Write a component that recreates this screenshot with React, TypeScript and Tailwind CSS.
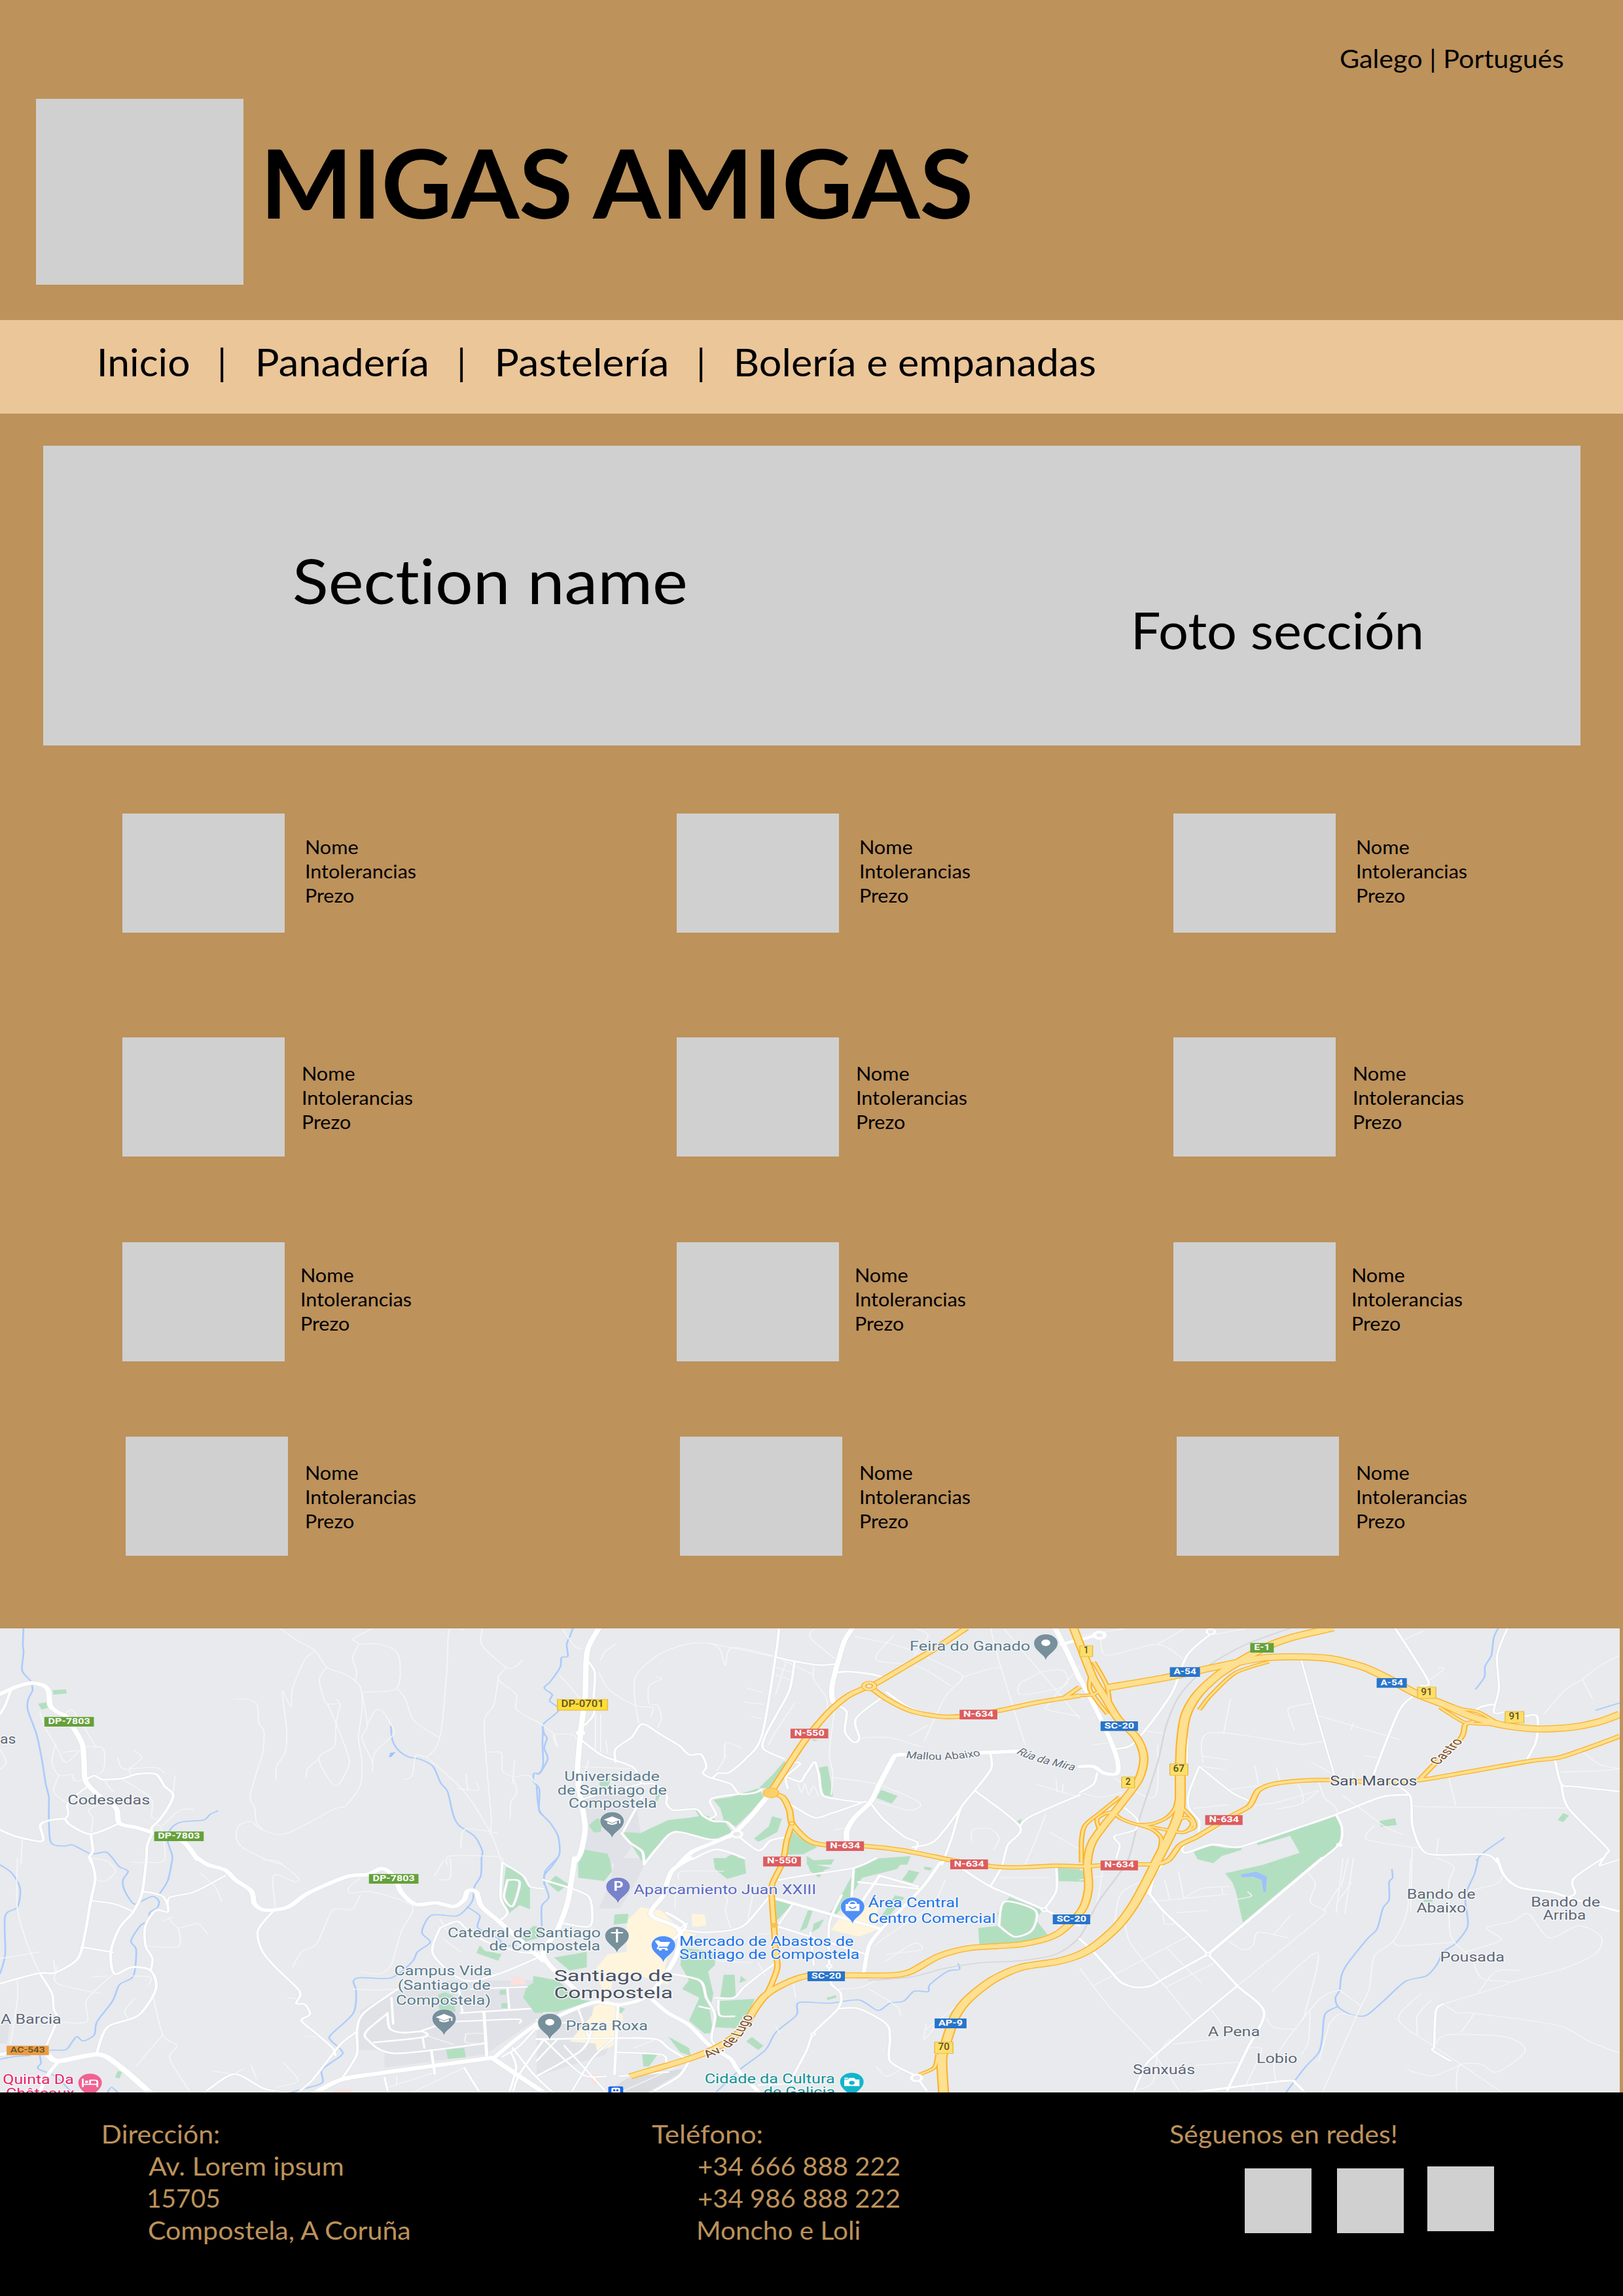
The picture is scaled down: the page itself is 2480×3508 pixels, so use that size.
import React, { useLayoutEffect, useRef } from "react";

/* ---------- text fitted to a given ink width ---------- */

function Fit({ text, className = "" }: { text: string; className?: string }) {
  const outer = useRef<HTMLSpanElement>(null);
  const inner = useRef<HTMLSpanElement>(null);
  useLayoutEffect(() => {
    const box = outer.current!;
    const el = inner.current!;
    const range = document.createRange();
    range.selectNodeContents(el);
    const cs = getComputedStyle(el);
    const ctx = document.createElement("canvas").getContext("2d")!;
    ctx.font = `${cs.fontWeight} ${cs.fontSize} ${cs.fontFamily}`;
    const m = ctx.measureText(text);
    // The rendered advance differs from the canvas one when ligatures are off.
    const advance = el.offsetWidth || m.width;
    const ink = m.actualBoundingBoxRight + m.actualBoundingBoxLeft + (text.length > 1 ? advance - m.width : 0);
    const s = box.clientWidth / ink;
    el.style.transform = `translateX(${m.actualBoundingBoxLeft * s}px) scaleX(${s})`;
  }, [text]);
  return (
    <span ref={outer} className={`block shrink-0 ${className}`}>
      <span ref={inner} className="inline-block origin-left whitespace-nowrap [font-variant-ligatures:none]">
        {text}
      </span>
    </span>
  );
}

/* ---------- map data ---------- */

type Road = [number, string];
type Tile = {
  x: number;
  y: number;
  grays?: string[];
  beiges?: string[];
  greens?: string[];
  waters?: string[];
  pinks?: string[];
  rivers?: string[];
  minor?: string[];
  white?: Road[];
  rails?: string[];
  yellow?: Road[];
};

const tiles: Tile[] = [
  {
    x: 0,
    y: 0,
    greens: ["152,310 190,307 193,325 154,331", "110,372 133,366 140,390 120,400"],
    waters: ["1122,617 1127,597 1142,594 1130,615"],
    rivers: [
      "68,25 66,100 68,140 64,220 88,268 94,310 82,350 80,400 105,510 120,620 132,740 141,800 141,900 147,1008 185,1025 210,1020 262,1060 305,1052 325,1080",
      "628,864 606,880 588,905 522,915 492,948 484,1000 496,1060 498,1080",
      "1128,475 1133,540 1150,585 1178,615 1215,628 1250,660 1272,735 1292,775 1308,880 1325,930 1370,980 1392,1045 1390,1080",
      "1568,475 1566,560 1568,650 1557,690 1541,692 1541,730 1557,765 1556,860 1568,885",
    ],
    minor: [
      "807,25 850,75 910,130 943,205 1000,240 1040,295 1045,400 1035,525 1045,640 1040,745 998,840 965,855 855,948 805,972 750,945 725,912 690,930 682,985 700,1030 770,1088 815,1108",
      "910,130 880,170 845,300 840,385 815,318 828,500 822,600 798,660 797,720",
      "943,205 922,260 935,350 945,372 980,370 969,350",
      "945,372 970,463 1005,610 1005,665 968,748 920,625 965,565 970,463 983,372",
      "920,625 888,670 884,708",
      "677,352 720,353 743,380 747,460 762,500 758,600 740,690 722,800 735,850 740,915 757,945",
      "1075,28 1020,75 1035,100 1018,160 1030,230 1025,270",
      "1035,100 1100,100 1150,150 1145,300 1045,318",
      "1145,300 1170,350 1195,450 1265,525",
      "1045,318 1060,470 1045,530 1075,640 1074,682",
      "1060,470 1082,405 1103,405 1128,465 1137,510 1085,590 1075,640",
      "1338,32 1297,37 1290,220 1275,480 1258,575 1230,615 1200,610 1190,700 1168,720",
      "1230,615 1340,775 1418,970 1450,1110",
      "1320,760 1380,770 1376,735",
      "1345,695 1350,770",
      "1392,28 1392,105 1462,205 1490,200 1508,172",
      "1462,205 1438,260 1490,330 1492,400 1568,470",
      "1438,260 1425,380 1398,460 1410,750 1418,900 1415,970",
      "1408,595 1447,598 1450,680 1480,710 1492,780 1475,820 1473,900",
      "1485,630 1480,740",
      "1480,710 1525,700 1545,735",
      "115,410 130,480 160,560 190,640 240,570",
      "160,560 150,640 170,700 207,697 215,725 245,722",
      "240,570 297,577 297,680 250,715",
      "190,415 215,410 278,575",
      "182,595 235,585",
      "390,590 410,620 375,670 378,700",
      "340,620 350,665 375,675",
      "375,670 450,665 475,690",
      "300,720 325,775",
      "355,720 435,805 438,890 460,905",
      "505,703 500,788",
      "470,930 520,860 560,857",
      "262,970 268,900 255,860 280,840",
      "190,825 155,775 170,700",
      "60,1110 65,985",
      "440,935 465,940 475,1085 425,1100 380,1098",
      "1290,1110 1300,1070 1440,1075 1450,1110",
      "1330,1035 1335,960 1360,945 1435,965",
      "0,580 18,640 0,675",
    ],
    white: [
      [8, "0,420 15,380 30,315"],
      [8, "250,718 272,702 298,720 355,714 395,695 450,695 475,750 500,788 488,840 460,905 438,940 438,970 425,1020 423,1085"],
      [8, "0,950 45,980 122,1002 116,930 140,908 185,900 200,925 262,970 345,920"],
      [8, "262,970 268,1045 258,1075 264,1100"],
      [6, "250,755 222,788 195,830 197,880 185,903"],
      [16, "0,328 50,293 90,278 125,288 140,315 145,380 165,410 190,430 215,490 238,560 243,650 248,730 290,800 335,850 345,920 395,940 440,962 485,985 530,1005 570,1085"],
    ],
  },
  {
    x: 1549,
    y: 0,
    grays: ["135,800 280,760 300,960 240,1110 140,1080 145,900"],
    greens: [
      "715,635 720,645 690,730 670,760 642,758 680,700",
      "510,812 560,800 640,760 660,805 575,935 540,905 530,850",
      "250,960 300,965 380,905 440,895 480,885 500,915 540,905 562,955 550,990 500,990 400,955 350,1030 310,1110 270,1010",
      "458,860 480,880 515,900 500,940 475,905",
      "815,665 840,657 848,720 855,798 825,790",
      "995,767 1042,795 1025,830 980,803",
      "680,888 708,900 695,960 660,990 640,1005 628,990 670,935",
      "735,950 760,985 810,1030 770,1062 720,1065",
      "150,930 175,897 190,905 185,960 165,962",
      "135,1040 205,1060 215,1110 120,1110",
      "1380,915 1400,900 1395,935",
      "515,1110 570,1055 600,1110",
      "965,1110 1000,1080 1080,1070 1070,1110",
      "180,740 200,700 212,720 208,750 185,750",
      "345,780 357,785 350,820 343,815",
      "780,1070 800,1090 860,1085 850,1110 780,1110",
      "793,533 815,540 800,543",
    ],
    rivers: [
      "105,25 97,60 87,100 90,155 72,160 68,205 40,270 22,300 45,330 38,360 65,400 20,465 22,510 30,530 22,575 32,625 10,690 0,693",
      "0,750 8,860 40,920 62,980 66,1060 45,1115 22,1160 24,1200 35,1260 15,1300 15,1390",
    ],
    minor: [
      "345,245 360,260 325,290 325,370 350,380 360,440 350,480",
      "285,380 285,250 350,150 430,100 500,95 530,125 545,195 565,115 690,155",
      "500,95 690,158",
      "285,380 295,460",
      "180,230 210,310 285,380 335,390 330,430",
      "228,100 200,130 185,170",
      "65,240 100,300 125,350",
      "605,300 650,320",
      "620,430 650,440",
      "600,365 655,375",
      "690,240 735,265",
      "680,200 740,230",
      "720,180 690,330",
      "690,155 800,240",
      "800,195 800,260 835,340 840,400",
      "850,710 980,740 1105,825 1075,860 980,820",
      "1030,60 980,170 1100,200 1195,290",
      "920,65 1050,110 1180,200 1230,250 1180,340 1120,540",
      "1090,25 1130,60 1090,150",
      "1230,250 1300,215 1340,205",
      "1310,25 1340,205 1410,560",
      "1430,250 1460,225 1520,220 1525,290 1400,330 1395,280 1430,250",
      "940,528 1020,528 1110,570",
      "1075,520 1130,470",
      "590,575 545,550 545,620",
      "50,510 60,570 50,515 110,520 120,590",
      "545,555 540,630 520,680",
      "745,370 690,500 670,560",
      "860,400 845,600 855,690 850,790",
      "1255,1000 1260,950 1310,945 1335,990 1320,1040",
      "1440,740 1568,800",
      "1500,725 1502,775",
      "1520,740 1518,780",
      "1470,880 1440,1000 1410,1110",
      "1480,960 1568,1040",
      "1350,30 1568,440",
      "1568,430 1475,400 1480,370 1568,200",
      "170,340 170,590",
      "185,420 185,590",
      "200,540 205,600",
      "0,450 50,510",
      "120,660 270,670",
      "120,700 240,690",
      "150,630 130,740",
      "755,740 765,780 775,740 785,790 800,750 815,800",
      "75,30 110,110 130,120",
      "800,30 790,70 860,165",
      "860,950 900,940",
    ],
    white: [
      [7, "150,180 168,230 165,340 165,420 140,470"],
      [7, "130,540 190,610 280,665 300,735 340,740 375,790 375,830 395,860 460,855 480,885 510,910 550,915 575,955"],
      [7, "228,640 228,580 275,525 305,465 360,515 410,562 440,605 475,605 490,660 480,690 500,710 560,740 585,785 630,780 650,765"],
      [7, "700,25 690,155 650,520 600,630 555,688 525,690 510,710"],
      [7, "690,158 745,178 815,195 862,190"],
      [7, "745,178 730,310 690,430 660,520 655,580 715,625"],
      [8, "870,228 900,225 960,235 1000,250"],
      [7, "870,380 895,410 890,500 915,548 932,530 922,440 1000,340"],
      [8, "1010,320 1065,380 1105,410"],
      [7, "720,820 760,860 805,895 860,870 950,820"],
      [7, "805,640 815,700 825,790 870,810 940,825"],
      [7, "965,830 1000,900 1060,980 1100,1010 1085,1060"],
      [7, "1310,600 1312,670 1265,770 1225,850 1200,980 1170,1110"],
      [7, "1265,770 1395,935 1360,1020 1345,1110"],
      [7, "1395,935 1425,890 1568,790"],
      [7, "1085,1030 1150,1000 1225,850"],
      [8, "575,970 640,1045 675,1000 715,985"],
      [7, "500,900 518,880 500,820 520,800 590,785"],
      [7, "245,965 270,1010 305,1050 310,1110"],
      [7, "310,1110 350,1030 400,960 500,995 560,985"],
      [7, "250,960 270,900 305,800"],
      [7, "725,760 720,710 760,730 775,700 800,640"],
      [7, "715,710 760,650 745,640"],
      [6, "130,810 200,780 300,740"],
      [8, "450,1085 520,1040 600,1080"],
      [16, "180,25 150,110 143,180 140,340 127,505 118,700 130,830 140,940 128,1050 115,1090"],
      [15, "912,25 890,80 870,180 853,290 855,360 870,380"],
      [16, "1060,605 1035,610 1020,650 990,740 965,820 915,900 895,960 897,1020"],
      [16, "665,800 615,895 575,960"],
      [16, "575,965 510,1010 450,1050 410,1110"],
      [16, "1280,597 1390,590"],
      [16, "1497,25 1530,130 1568,260"],
      [14, "1515,100 1550,85"],
    ],
    yellow: [
      [15, "1240,25 1160,110 1060,205 985,275 960,292"],
      [15, "960,292 900,335 850,400 810,470 770,550 720,670 675,780"],
      [13, "960,292 1010,350 1080,405 1160,430 1225,430 1330,405 1450,365 1568,335"],
      [13, "675,780 710,800 730,860 737,920 770,980 800,1010 850,1022 950,1025 1060,1045 1200,1090 1240,1100"],
      [11, "737,925 722,1000 710,1100 680,1200 680,1280 685,1390 690,1500 695,1580 680,1650 665,1700"],
      [10, "1520,348 1568,295"],
    ],
  },
  {
    x: 3117,
    y: 0,
    greens: [
      "328,1050 380,1022 425,1035 465,1032 468,1042 410,1070 385,1103 340,1085",
      "738,887 757,940 750,1010 690,1095 472,1385 450,1230 440,1190 420,1150 530,1110 635,1055 607,978 515,1020 510,1010 640,940",
      "865,910 910,897 915,928 870,937",
      "1380,905 1395,873 1412,885 1395,915",
    ],
    rivers: [
      "1208,25 1195,70 1188,150 1170,200 1168,250 1143,305",
      "1560,368 1490,402",
      "1225,988 1165,1055 1145,1090",
    ],
    rails: [
      "610,25 480,100 370,200 290,330 250,470 225,640 170,910 140,1085 100,1180 50,1290 0,1440 -68,1520 -168,1550 -288,1560 -388,1585 -488,1625 -608,1640",
    ],
    minor: [
      "60,80 80,150 225,100 300,170",
      "225,100 300,30",
      "0,60 130,28",
      "385,55 480,28",
      "685,425 920,535",
      "790,460 783,490",
      "670,370 605,390 605,430 620,495",
      "435,350 415,510",
      "640,560 375,505 355,640",
      "640,560 700,545",
      "355,612 430,630",
      "345,658 420,675",
      "505,655 515,735",
      "568,665 578,730",
      "670,640 735,700",
      "435,765 530,745",
      "500,840 580,820 685,770",
      "570,855 640,830 690,770",
      "630,740 645,800 640,830",
      "690,730 705,800 735,840 745,875",
      "760,795 800,840 880,935 930,970",
      "850,930 830,995 985,1035",
      "960,838 1010,845 1410,850",
      "1065,710 1085,835",
      "1560,150 1500,200 1450,260 1400,310 1340,420",
      "1450,260 1480,350",
      "1455,595 1500,650 1560,670",
      "1390,685 1500,680 1560,670",
      "1008,265 1050,215 1035,205",
      "935,80 990,40",
      "330,852 430,835",
      "355,980 450,890",
      "180,495 250,510",
      "40,560 90,550",
      "100,715 215,800 225,560",
      "820,610 865,620",
      "790,685 785,740",
      "960,1035 955,1320",
      "1035,990 1030,1060",
      "0,780 60,800 120,780",
    ],
    white: [
      [7, "378,52 310,150 270,310 215,440 150,560 100,580"],
      [7, "910,25 1005,265 985,290"],
      [7, "960,340 920,410 850,690 850,720"],
      [6, "1235,25 1205,150 1210,300 1195,410 1225,410"],
      [8, "1140,405 1160,385 1195,375"],
      [7, "1285,430 1320,430 1318,540 1292,625"],
      [7, "1372,630 1390,740 1430,752 1560,775"],
      [7, "1390,740 1410,850 1520,1030 1520,1060 1500,1110"],
      [5, "640,175 685,430 735,700"],
      [7, "920,750 955,800 960,930 985,1035 1025,1065 1170,1063 1205,1100"],
      [8, "945,790 870,800 740,880 640,935 500,1010 450,1030 380,1018 310,1055 295,1040 305,1005"],
      [7, "740,880 757,940 750,1015 690,1095"],
      [6, "345,660 440,780 490,820 480,850"],
      [6, "345,660 315,780 315,850 345,910 342,960"],
      [6, "310,530 308,700"],
      [7, "0,780 40,740 50,690"],
      [6, "130,850 165,900 160,950 100,980 115,1020 105,1080"],
      [14, "10,75 40,62"],
      [14, "-5,240 60,440 105,610 108,690 70,690 40,660 0,660"],
    ],
    yellow: [
      [7, "65,300 40,330 0,335 -48,348"],
      [7, "5,120 30,230 30,310 80,420"],
      [7, "40,180 78,290 90,400 115,440"],
      [7, "5,1100 5,1000 15,930 60,870 115,800"],
      [7, "60,960 50,900 90,870 120,900 165,925 210,922 250,895 275,850 285,780"],
      [7, "165,925 210,950 235,990 230,1050"],
      [7, "165,925 250,950 300,962 325,925 310,895 285,905 270,950"],
      [7, "290,840 325,900 330,940 300,962"],
      [7, "545,180 450,230 380,330 345,400"],
      [7, "1200,455 1150,410 1100,395 1030,355"],
      [7, "1230,470 1130,462 1100,450 1040,390"],
      [
        12,
        "-388,1085 -328,1100 -240,1120 -168,1122 -68,1115 20,1118 100,1108 210,1108 255,1090 290,1020 340,980 440,885 490,840 515,770 560,740 640,725 720,722 850,730 980,722 1120,685 1300,635 1380,620 1440,590 1510,550 1560,520",
      ],
      [10, "980,722 1020,655 1100,530 1112,470 1135,455"],
      [7, "-410,1980 -420,2040 -463,2072"],
      [
        19,
        "-18,25 5,120 40,260 75,350 110,440 165,530 185,620 170,720 120,830 70,930 35,1010 22,1100 25,1220 5,1320 -68,1430 -168,1475 -318,1492 -408,1530 -488,1600 -548,1617 -678,1617 -788,1620 -858,1660 -908,1710 -938,1770 -978,1870 -1038,1940 -1128,2000 -1298,2080",
      ],
      [
        24,
        "730,25 620,65 540,110 470,170 400,240 340,330 305,430 293,560 290,700 288,860 262,970 225,1085 195,1180 155,1295 110,1390 50,1475 0,1522 -68,1555 -168,1580 -248,1635 -318,1720 -358,1800 -383,1910 -398,2000 -393,2160",
      ],
      [
        24,
        "80,298 240,255 350,218 450,185 530,162 620,157 720,165 820,205 900,265 970,325 1050,375 1130,430 1220,470 1320,488 1420,480 1500,455 1560,420",
      ],
    ],
  },
  {
    x: 0,
    y: 1080,
    grays: ["1040,700 1148,600 1300,560 1568,560 1568,720 1400,900 1110,960 1110,880 1035,880", "0,750 30,740 20,850 0,850"],
    greens: [
      "1460,40 1495,60 1530,135 1530,235 1500,215 1465,258 1450,180",
      "1568,545 1520,590 1510,640 1545,710 1568,708",
      "1265,625 1285,615 1308,630 1315,705 1268,700",
      "1288,877 1340,870 1345,913 1293,920",
      "1385,400 1400,425 1448,440 1438,470 1375,435",
      "1442,606 1460,603 1461,625 1443,627",
      "1447,666 1464,664 1465,686 1448,687",
      "340,975 352,980 345,1010 332,1005",
      "1500,370 1540,310 1568,320 1568,360 1510,385",
    ],
    pinks: ["1475,550 1500,540 1522,578 1475,582", "960,1075 975,1055 1010,1058 1020,1075"],
    rivers: [
      "0,30 35,70 58,140 50,225 15,265 15,440 0,530",
      "325,0 345,40 370,60 355,100 360,150 385,208 405,200 440,175 458,195 455,225 432,250 430,285 405,310 378,380 393,420 385,540 345,580 325,655 280,750 272,810 240,838 222,818 205,850 190,878 145,880",
      "498,0 485,100 460,165",
      "85,905 40,910 0,922",
      "115,905 118,940 110,965 160,1000 205,1070",
      "1390,0 1388,80 1370,130 1365,190 1350,225 1318,265 1245,262 1218,340 1242,385 1205,430 1190,475 1130,548 1040,548 1020,565 1028,610 1020,710 955,810 955,835 985,880 985,905 930,970 930,1030 870,1060 840,1075",
      "1350,225 1385,265 1380,320 1440,370 1450,400 1490,400",
      "310,1075 322,1050 340,1075",
    ],
    minor: [
      "50,0 50,230 80,400 115,528",
      "515,320 515,405 420,402",
      "485,270 515,320 570,300 600,350",
      "470,290 500,270",
      "440,620 470,810 510,860 490,920 550,1075",
      "470,810 395,950",
      "760,10 800,15 860,90 850,108 790,80 795,230",
      "1255,80 1280,10",
      "1300,0 1300,90 1270,100",
      "1040,90 1010,130 1010,160 1075,155 1190,220 1160,330 1130,490",
      "1040,170 1015,235 960,240 915,390 870,430 845,500",
      "1020,600 1080,605 1148,600",
      "165,500 165,575 290,620",
      "325,535 250,650 250,750 160,750",
      "0,460 115,430",
      "160,525 155,470",
      "725,950 740,1010",
      "675,990 610,975",
      "675,990 705,965",
      "640,200 620,130 580,70",
      "820,940 860,1020 800,1050",
      "265,0 310,15 333,60 305,105 275,98",
      "50,560 50,650 30,850",
      "380,540 435,545 430,580",
      "390,640 360,700 370,735",
      "265,545 310,540",
      "830,640 860,645",
      "880,815 910,820",
      "1270,280 1290,330",
      "1280,370 1330,430",
      "1345,805 1395,805 1395,845 1345,845 1345,805",
      "1225,810 1310,855",
      "1300,615 1325,620",
      "1145,1040 1145,1000",
      "1120,1050 1250,985",
      "1190,1075 1340,960",
      "1040,520 1100,530 1130,490",
    ],
    white: [
      [8, "262,0 275,90 262,195 245,350 225,460 160,525 110,528 0,575"],
      [6, "262,195 330,210 385,245"],
      [8, "423,0 410,160 385,245 345,320 320,430 330,530 380,500 435,515 450,600 400,720 310,775 280,890"],
      [7, "410,152 470,175 485,245 450,240 420,310 420,400 440,460 435,515"],
      [6, "485,225 490,180 560,155 650,80"],
      [7, "235,408 325,432"],
      [7, "115,528 150,620 155,690 165,740 135,855"],
      [7, "790,240 745,330 755,420 795,500 865,610 855,665 880,670 895,715 870,745 910,800 960,870 968,905"],
      [7, "1030,795 985,850 940,940 900,1020 860,1075"],
      [7, "1148,600 1050,710 1030,790 1030,900 985,1015"],
      [7, "590,1075 675,990 760,1055 830,1075"],
      [7, "1120,710 1060,790 1060,830 1140,895 1405,848"],
      [7, "1118,710 1125,780 1160,800 1220,795 1225,820 1080,845"],
      [7, "1130,640 1135,760"],
      [7, "1210,795 1265,765"],
      [6, "1220,820 1225,870"],
      [8, "1245,880 1255,990"],
      [7, "1330,710 1530,690"],
      [9, "1397,705 1405,905"],
      [6, "1310,750 1490,738 1500,755"],
      [6, "1360,600 1520,590"],
      [6, "1465,595 1470,690"],
      [6, "1325,600 1335,710"],
      [7, "1450,20 1445,180 1465,250 1440,290"],
      [6, "1450,20 1510,80 1530,130 1568,140"],
      [6, "1465,100 1455,180 1480,220 1500,110 1465,100"],
      [7, "1270,320 1320,290 1350,330 1400,380 1500,430 1568,435"],
      [7, "1270,320 1250,440 1340,560 1440,530 1568,445"],
      [7, "1110,1005 1120,1075"],
      [7, "1340,960 1385,1075"],
      [7, "1475,890 1490,960 1470,1075"],
      [7, "1570,830 1500,990 1480,1075"],
      [7, "1450,910 1500,860 1568,740"],
      [7, "1480,870 1540,990 1600,1080"],
      [
        16,
        "570,0 600,30 650,55 680,100 725,150 735,210 765,238 830,225 890,160 1000,85 1060,75 1100,48 1125,65 1145,110 1160,160 1200,212 1260,205 1310,222 1340,190 1350,150 1375,155 1390,220 1440,290 1490,360 1568,470",
      ],
      [20, "140,905 170,930 285,900 350,960 440,1085"],
      [14, "0,900 20,895"],
      [12, "170,930 140,990 115,1070"],
      [18, "900,1085 985,1015 1100,985 1260,950 1420,915"],
      [18, "1420,915 1490,990 1580,1085"],
      [14, "1430,910 1490,830 1580,725"],
    ],
  },
  {
    x: 1549,
    y: 1080,
    grays: ["180,230 210,120 230,0 320,0 290,100 240,230", "0,720 160,680 230,760 200,900 0,1000"],
    beiges: [
      "260,290 300,225 360,240 410,320 385,420 370,500 380,580 300,540 220,550 210,660 240,680 250,740 220,860 175,890 170,850 95,840 160,720 165,680 195,660 185,580 165,520 205,440 260,430",
      "447,255 485,258 490,310 450,315",
      "415,330 460,350 430,400 410,390",
      "890,240 985,210 980,330 930,360 850,330",
    ],
    greens: [
      "120,0 210,0 218,60 195,105 120,90",
      "55,80 93,120 62,155 32,115",
      "225,258 265,255 262,298 222,305",
      "50,455 145,430 145,500 95,515",
      "-10,540 60,560 130,650 160,655 60,705 -10,705",
      "420,410 515,430 515,490 495,520 510,620 500,700 510,800 485,805 440,745 470,640 420,600 440,560 415,490",
      "540,535 572,535 575,640 530,640",
      "525,655 630,645 610,715 575,780 510,775",
      "590,540 605,560 585,572",
      "622,820 655,860 640,880 605,840",
      "510,0 600,0 605,70 550,95 515,50",
      "690,190 738,210 700,275 690,290",
      "783,240 797,240 780,320 760,335",
      "800,300 830,280 815,320 795,340",
      "920,50 990,0 1065,0 1040,50 940,90 900,190 860,270 840,265 880,170",
      "1075,55 1105,65 1085,115 1055,100",
      "1120,38 1142,45 1135,58 1118,50",
      "1035,170 1062,180 1010,280 985,290",
      "1365,178 1460,240 1440,280 1475,350 1400,395 1278,398 1275,320 1335,310 1330,250",
      "1505,45 1568,50 1568,108 1505,105",
      "837,640 865,628 865,640 840,650",
      "305,900 350,898 325,955 308,955",
      "380,818 440,870 445,905 415,890",
      "780,20 850,45 830,55 815,90 790,60",
      "235,680 255,690 245,710 235,710",
    ],
    pinks: ["145,995 175,990 182,1020 165,1040"],
    rivers: [
      "1217,485 1220,510 1185,520 1135,580 1130,612 1090,610 1060,655 1020,665 985,698 930,650 845,665 757,662 750,720 690,800 660,880 590,965 520,1070",
      "60,0 25,60 22,120",
    ],
    minor: [
      "410,100 420,60 540,60",
      "530,130 550,190 545,240 560,320",
      "400,120 400,230",
      "610,280 630,120",
      "640,350 700,340",
      "1010,440 1110,420 1090,390 1010,470",
      "1160,200 1000,370 980,400",
      "1340,90 1480,90",
      "1180,100 1140,230 1085,300",
      "1125,760 1120,830 1160,750",
      "1280,590 1210,680 1120,790",
      "960,600 1040,680 1050,720",
      "870,600 940,590 1000,540",
      "740,560 748,640",
      "640,480 660,540",
      "520,470 620,480",
      "980,955 1010,1000 1050,970",
      "690,770 700,800",
      "280,870 345,830",
      "140,400 160,320",
      "20,330 60,350",
      "240,1075 400,960",
    ],
    white: [
      [7, "20,100 120,150 155,190 155,310 80,300"],
      [7, "410,325 480,340 560,330 605,300 670,180"],
      [7, "700,100 770,80 915,45 980,0"],
      [7, "915,45 910,180"],
      [8, "1230,50 1310,130 1465,235 1568,310"],
      [7, "1310,130 1340,50"],
      [7, "1500,40 1500,150 1465,235"],
      [7, "370,525 470,560 490,640 515,720 505,830 530,880"],
      [7, "515,640 570,640 600,590 690,480"],
      [6, "525,650 528,720 570,725"],
      [7, "845,500 850,575 878,620 870,690 800,800 780,880 740,1000"],
      [7, "870,690 930,690 1010,760 1020,830 1020,930 1085,990"],
      [7, "1105,1020 1130,1075"],
      [8, "0,830 240,825 345,830 380,870 440,930"],
      [8, "235,670 225,990"],
      [7, "230,890 360,900 375,940"],
      [7, "0,1000 130,880 160,780"],
      [6, "60,830 0,930"],
      [6, "20,830 130,990 200,1000"],
      [6, "80,860 200,1070"],
      [6, "100,1075 160,920 220,830"],
      [6, "0,740 120,760 240,750"],
      [6, "120,690 150,820"],
      [8, "440,930 410,1000 330,1075"],
      [7, "880,170 845,300 845,500"],
      [6, "790,340 800,490"],
      [6, "740,210 700,300"],
      [6, "640,1040 740,1035"],
      [6, "1335,310 1350,200 1440,240 1430,330 1380,360 1335,310"],
      [6, "435,300 410,325"],
      [6, "470,680 500,690"],
      [6, "380,980 240,1000"],
      [8, "930,110 1100,140"],
      [12, "680,180 865,265 995,325"],
      [12, "995,325 960,400 945,520"],
      [10, "1165,20 1110,140 995,325"],
      [8, "700,315 950,440"],
      [9, "990,80 930,220"],
      [9, "990,80 1100,130"],
      [10, "375,250 430,310 390,380"],
      [16, "110,0 90,200 60,330 20,450 110,600"],
      [15, "445,0 390,60 365,170 330,260 410,325 405,440 360,560 310,640 240,672 170,660 75,715 0,780"],
      [14, "335,650 380,710 440,765 500,860 560,920 580,970 640,1070"],
    ],
  },
  {
    x: 3117,
    y: 1080,
    waters: ["465,75 510,62 540,85 537,155 530,155 525,100 500,85 467,88"],
    greens: ["-10,50 12,60 12,108 -10,108", "993,190 1018,190 1018,202 993,200"],
    rivers: [
      "1150,0 1140,70 1120,140 1113,200 1120,310 1085,390 1050,430 1030,490 1000,540 940,565 880,650 830,718 800,723 775,712 745,680 738,640 750,605 755,540 770,490 830,370 858,325 875,230 893,190 893,110 903,90 901,52",
      "745,680 708,715 700,820 690,890 650,960 595,1075",
    ],
    minor: [
      "0,505 90,690 215,900 290,1075",
      "45,580 310,360",
      "250,590 390,480",
      "180,465 250,595 330,750",
      "250,410 350,570",
      "100,300 120,160 200,90",
      "130,300 150,400 250,595",
      "65,60 50,200 20,300",
      "760,0 740,250",
      "765,255 790,0",
      "755,130 775,0",
      "745,200 785,110",
      "955,0 945,240 905,380 850,450 835,600 800,720 700,1075",
      "905,380 930,402 1080,385",
      "1080,385 1068,330 1065,120 1080,40 1030,0",
      "1120,150 1200,120 1220,85",
      "660,70 680,120 665,200 705,240 690,280 455,585",
      "705,240 745,140",
      "645,740 687,435 555,610",
      "1080,385 1130,460 1160,550 1240,570 1150,620 1050,668",
      "1240,570 1400,505 1490,435 1505,360 1440,310 1355,365 1295,255 1250,290 1175,320 1215,375 1115,430",
      "1150,620 1200,520 1270,515",
      "1050,668 1090,710 1130,710 1375,765 1470,840 1560,895",
      "1140,710 1100,800",
      "1025,860 1060,810 1230,820 1285,885 1205,980 1160,945 1100,945 1088,1000 1088,1075",
      "1018,645 975,720 975,810",
      "985,620 920,740 1020,860 1100,945 1220,1075",
      "1100,945 1020,998 945,970",
      "270,853 420,825",
      "380,695 410,760",
      "665,705 660,840 640,900",
      "750,605 690,650 570,900 565,1020",
      "530,710 560,775 625,785",
      "335,950 460,935",
      "150,1070 210,1030 225,900 260,830",
      "430,380 470,420 500,400 515,340 600,365",
      "610,260 560,350",
      "200,200 300,185 430,165",
      "300,185 350,140 430,130",
      "410,130 412,165",
      "450,190 495,175 485,155",
      "240,240 245,300 280,300",
      "280,250 370,240",
      "0,100 70,80",
      "285,60 300,185",
      "245,100 260,190",
      "750,605 810,675",
      "480,1040 525,880 485,870",
      "500,1070 500,1030",
      "540,1075 540,1030",
      "720,760 750,715 800,725",
      "720,760 690,930",
    ],
    white: [
      [12, "250,10 215,70 200,160"],
      [8, "200,160 240,240 300,330 370,440 455,585 532,705 485,870 430,1050 425,1075"],
      [10, "700,0 640,80 472,305 370,440"],
      [8, "370,440 250,545 205,585 160,592 120,570 90,520 40,430 0,370"],
      [7, "455,585 330,750 220,900 190,950 155,1075"],
      [9, "320,1075 430,1052 600,1020 625,1035 650,1075"],
      [9, "1205,0 1225,80 1270,135 1360,155 1410,180 1500,220 1558,245"],
      [7, "1510,0 1425,95 1430,160 1410,180"],
      [7, "1050,668 1028,700 1023,860 1018,880 1070,930"],
      [5, "1560,5 1500,35"],
    ],
  },
];

/** Turns a point list into a smooth Catmull-Rom curve. */
function curve(points: string): string {
  const p = points.split(" ").map((s) => s.split(",").map(Number));
  let d = `M${p[0][0]} ${p[0][1]}`;
  for (let i = 0; i < p.length - 1; i++) {
    const a = p[i - 1] ?? p[i];
    const b = p[i];
    const c = p[i + 1];
    const e = p[i + 2] ?? c;
    d += `C${b[0] + (c[0] - a[0]) / 7} ${b[1] + (c[1] - a[1]) / 7} ${c[0] - (e[0] - b[0]) / 7} ${c[1] - (e[1] - b[1]) / 7} ${c[0]} ${c[1]}`;
  }
  return d;
}

type Label = [number, number, number, number, string, string, number?];
const SL = "#5f6775";
const PI = "#5c7b8a";
const BL = "#1b73e8";
const labels: Label[] = [
  [0, 0, 555, 46, "as", SL],
  [0, 195, 833, 238, "Codesedas", SL],
  [1, 1077, 130, 348, "Feira do Ganado", PI],
  [1, 80, 727, 275, "Universidade", PI],
  [1, 60, 788, 316, "de Santiago de", PI],
  [1, 92, 850, 255, "Compostela", PI],
  [2, 722, 746, 252, "San Marcos", "#4a5567"],
  [3, 1292, 362, 442, "Catedral de Santiago", PI],
  [3, 1412, 423, 321, "de Compostela", PI],
  [3, 1138, 536, 282, "Campus Vida", PI],
  [3, 1148, 602, 268, "(Santiago de", PI],
  [3, 1143, 671, 274, "Compostela)", PI],
  [3, 2, 759, 175, "A Barcia", SL],
  [3, 8, 1035, 205, "Quinta Da", "#ec2369"],
  [3, 17, 1098, 198, "Châteaux", "#ec2369"],
  [4, 280, 164, 527, "Aparcamiento Juan XXIII", "#5b69c3"],
  [4, 957, 225, 262, "Área Central", BL],
  [4, 957, 298, 368, "Centro Comercial", BL],
  [4, 412, 402, 503, "Mercado de Abastos de", BL],
  [4, 412, 463, 520, "Santiago de Compostela", BL],
  [4, 50, 565, 343, "Santiago de", "#4c5261", 71],
  [4, 50, 641, 343, "Compostela", "#4c5261", 71],
  [4, 84, 788, 237, "Praza Roxa", PI],
  [4, 485, 1032, 376, "Cidade da Cultura", "#129396"],
  [4, 655, 1093, 207, "de Galicia", "#129396"],
  [5, 944, 187, 198, "Bando de", SL],
  [5, 972, 248, 143, "Abaixo", SL],
  [5, 1302, 221, 200, "Bando de", SL],
  [5, 1337, 282, 124, "Arriba", SL],
  [5, 1040, 473, 186, "Pousada", SL],
  [5, 370, 816, 150, "A Pena", SL],
  [5, 510, 940, 118, "Lobio", SL],
  [5, 153, 990, 180, "Sanxuás", SL],
];

const G = "#65a13a";
const R = "#dc5c5f";
const B = "#2874cb";
const Y = "#fede68";
type Shield = [number, number, number, number, number, string, string];
const shields: Shield[] = [
  [0, 128, 433, 143, 44, "DP-7803", G],
  [0, 445, 958, 143, 44, "DP-7803", G],
  [1, 60, 352, 145, 50, "DP-0701", "#fedc3a"],
  [1, 733, 487, 109, 44, "N-550", R],
  [1, 1221, 400, 109, 44, "N-634", R],
  [1, 836, 1003, 109, 44, "N-634", R],
  [1, 654, 1073, 109, 45, "N-550", R],
  [1, 1194, 1086, 109, 45, "N-634", R],
  [2, 492, 94, 68, 44, "E-1", G],
  [2, 260, 205, 87, 44, "A-54", B],
  [2, 857, 255, 87, 44, "A-54", B],
  [2, 60, 453, 108, 44, "SC-20", B],
  [2, 260, 648, 52, 52, "67", Y],
  [2, 121, 708, 37, 50, "2", Y],
  [2, 0, 106, 37, 50, "1", Y],
  [2, 975, 296, 53, 52, "91", Y],
  [2, 1228, 408, 54, 52, "91", Y],
  [2, 362, 883, 108, 45, "N-634", R],
  [2, 60, 1091, 108, 45, "N-634", R],
  [3, 1065, 73, 143, 44, "DP-7803", G],
  [3, 19, 860, 122, 43, "AC-543", "#eb9b44"],
  [4, 782, 519, 108, 45, "SC-20", B],
  [4, 1490, 258, 108, 45, "SC-20", B],
  [4, 1149, 735, 92, 45, "AP-9", B],
  [4, 1149, 843, 53, 52, "70", Y],
];

const dot = <ellipse rx="13" ry="15" fill="#fff" />;
const cap = (
  <g fill="#fff">
    <path d="M-24-4L0-19L24-4L0 11Z" />
    <path d="M-14 5V14Q0 25 14 14V5L0 14Z" />
    <path d="M20-4h4v17h-4z" />
  </g>
);
const cross = <path d="M0-26V30M-15-12H15" stroke="#fff" strokeWidth="6" fill="none" />;
const cart = (
  <g fill="#fff">
    <path d="M-22-20h9l4 7h29l-8 22h-24l-2 5h25v5h-31l5-14l-9-20z" />
    <circle cx="-9" cy="22" r="4.5" />
    <circle cx="9" cy="22" r="4.5" />
  </g>
);
const bag = (
  <g>
    <path d="M-20-10H20V22H-20Z" fill="#fff" />
    <path d="M-10-8V-15Q0-30 10-15V-8" stroke="#fff" strokeWidth="5" fill="none" />
    <path d="M-9 4Q0 18 9 4" stroke="#4f8ff7" strokeWidth="5" fill="none" />
  </g>
);
const camera = (
  <g>
    <path d="M-22-8h11l4-8h14l4 8h11v30h-44z" fill="#fff" />
    <ellipse cy="7" rx="8" ry="9" fill="#12b5cb" />
    <path d="M-20-14h8" stroke="#fff" strokeWidth="5" />
  </g>
);
const bed = (
  <g stroke="#fff" fill="none" strokeLinecap="butt">
    <path d="M-21-16V22M21 22V-2Q21-9 14-9H0V8M-21 10H21" strokeWidth="5" />
    <ellipse cx="-10" cy="-2" rx="5" ry="6" fill="#fff" stroke="none" />
  </g>
);
const parking = (
  <text x="-13" y="21" fontSize="58" fontWeight="700" fill="#fff" textLength="28" lengthAdjust="spacingAndGlyphs">
    P
  </text>
);
const pins: [number, number, number, string, React.ReactNode][] = [
  [1, 1470, 93, "#78909c", dot],
  [1, 218, 908, "#78909c", cap],
  [3, 1282, 733, "#78909c", cap],
  [3, 260, 1027, "#f06292", bed],
  [4, 235, 128, "#7883ca", parking],
  [4, 232, 354, "#78909c", cross],
  [4, 38, 752, "#78909c", dot],
  [4, 366, 397, "#4f8ff7", cart],
  [4, 912, 220, "#4f8ff7", bag],
  [4, 910, 1023, "#12b5cb", camera],
];

function Layer({ draw }: { draw: (t: Tile) => React.ReactNode }) {
  return (
    <>
      {tiles.map((t, i) => (
        <g key={i} transform={`translate(${t.x} ${t.y})`}>
          {draw(t)}
        </g>
      ))}
    </>
  );
}

const polys = (list: string[] | undefined, fill: string) =>
  list?.map((p, i) => <polygon key={i} points={p} fill={fill} />);
const lines = (list: string[] | undefined, stroke: string, width: number) =>
  list?.map((p, i) => <path key={i} d={curve(p)} stroke={stroke} strokeWidth={width} />);

function CityMap() {
  const at = (tile: number, x: number, y: number) => `translate(${tiles[tile].x + x} ${tiles[tile].y + y})`;
  return (
    <svg className="block h-[709px] w-[2475px] shrink-0 bg-[#e8eaed] [font-family:Roboto,sans-serif]" viewBox="0 0 2475 709">
      <g transform="scale(0.52934 0.33333) translate(0 -27)" fill="none" strokeLinecap="round" strokeLinejoin="round">
        <Layer draw={(t) => polys(t.grays, "#e0e2e7")} />
        <polygon transform="translate(1549 1080)" points="200,1075 260,1010 440,960 320,1075" fill="#dadce0" />
        <Layer draw={(t) => polys(t.beiges, "#fef5dc")} />
        <Layer draw={(t) => polys(t.greens, "#b3dfc1")} />
        <Layer draw={(t) => polys(t.pinks, "#fce0dd")} />
        <Layer draw={(t) => polys(t.waters, "#9dc2fb")} />
        <Layer draw={(t) => lines(t.rivers, "#abcbfb", 5)} />
        <Layer draw={(t) => lines(t.minor, "#f5f6f6", 3.5)} />
        <Layer draw={(t) => lines(t.rails, "#d5d7db", 5)} />
        <Layer draw={(t) => t.white?.map(([w, p], i) => <path key={i} d={curve(p)} stroke="#dfe2e6" strokeWidth={w + 3} />)} />
        <Layer draw={(t) => t.white?.map(([w, p], i) => <path key={i} d={curve(p)} stroke="#fff" strokeWidth={w} />)} />
        <g transform="translate(3117 0)" stroke="#fff" fill="#e8eaed">
          <circle cx="57" cy="58" r="15" strokeWidth="11" />
          <circle cx="378" cy="42" r="12" strokeWidth="6" />
        </g>
        <Layer draw={(t) => t.yellow?.map(([w, p], i) => <path key={i} d={curve(p)} stroke="#fbb32b" strokeWidth={w + 8} strokeLinecap="butt" />)} />
        <Layer draw={(t) => t.yellow?.map(([w, p], i) => <path key={i} d={curve(p)} stroke="#fde090" strokeWidth={w} strokeLinecap="butt" />)} />
        <g transform="translate(1549 0)">
          <circle cx="960" cy="291" r="15" stroke="#fbb32b" strokeWidth="16" fill="#e8eaed" />
          <circle cx="960" cy="291" r="16" stroke="#fde090" strokeWidth="9" />
          <circle cx="677" cy="781" r="22" fill="#fcd06b" stroke="#fbc04a" strokeWidth="4" />
          <circle cx="737" cy="921" r="8" fill="#fde090" stroke="#fbb32b" strokeWidth="4" />
          <circle cx="686" cy="1388" r="11" fill="#fcc04d" />
          <circle cx="127" cy="506" r="13" fill="#fff" />
          <circle cx="578" cy="970" r="15" stroke="#fff" strokeWidth="8" fill="#e8eaed" />
          <circle cx="1097" cy="2087" r="15" stroke="#fff" strokeWidth="8" fill="#e8eaed" />
          <circle cx="1465" cy="1316" r="8" stroke="#fff" strokeWidth="5" fill="#e8eaed" />
          <circle cx="845" cy="1575" r="7" stroke="#fff" strokeWidth="5" fill="#e8eaed" />
          <circle cx="798" cy="1887" r="6" stroke="#fff" strokeWidth="4" fill="#e8eaed" />
        </g>
        <circle cx="3487" cy="1520" r="7" stroke="#fff" strokeWidth="5" fill="#e8eaed" />
        <circle cx="3866" cy="1019" r="9" fill="#fff" />

        {shields.map(([t, x, y, w, h, text, color], i) => {
          const dark = h > 45;
          const plain = dark || text === "AC-543";
          return (
            <g key={i} transform={at(t, x, y)}>
              <rect width={w} height={h} fill={color} stroke={dark ? "#e3b93a" : color} strokeWidth={dark ? 2.5 : 0} />
              <text
                x={w / 2}
                y={h > 45 ? 36 : 32}
                fontSize={dark ? 42 : 38}
                fontWeight={plain ? 500 : 700}
                fill={plain ? "#5d5222" : "#fff"}
                textAnchor="middle"
                textLength={text.length === 1 ? 15 : text.length === 2 ? 33 : w - 22}
                lengthAdjust="spacingAndGlyphs"
              >
                {text}
              </text>
            </g>
          );
        })}

        <g stroke="#f4f6f9" strokeWidth="8" className="[paint-order:stroke]">
          {labels.map(([t, x, y, w, text, color, size], i) => (
            <text
              key={i}
              transform={at(t, x, y)}
              fontSize={size ?? 58}
              fill={color}
              textLength={w}
              lengthAdjust="spacingAndGlyphs"
            >
              {text}
            </text>
          ))}
          <path id="mallou" d="M2614 620Q2720 642 2835 610" stroke="none" />
          <path id="mira" d="M2932 598Q2960 622 3000 640L3110 684" stroke="none" />
          <path id="castro" d="M4152 655L4228 538" stroke="none" />
          <path id="lugo" d="M2042 1996Q2125 1950 2150 1870L2184 1782" stroke="none" />
          <g fontSize="45" fill="#636c75">
            <text>
              <textPath href="#mallou" textLength="220" lengthAdjust="spacingAndGlyphs">
                Mallou Abaixo
              </textPath>
            </text>
            <text>
              <textPath href="#mira" textLength="186" lengthAdjust="spacingAndGlyphs">
                Rúa da Mira
              </textPath>
            </text>
          </g>
          <g fontSize="46" fill="#7d4a1a">
            <text>
              <textPath href="#castro" textLength="132" lengthAdjust="spacingAndGlyphs">
                Castro
              </textPath>
            </text>
            <text>
              <textPath href="#lugo" textLength="240" lengthAdjust="spacingAndGlyphs">
                Av. de Lugo
              </textPath>
            </text>
          </g>
        </g>

        {pins.map(([t, x, y, color, icon], i) => (
          <g key={i} transform={at(t, x, y)}>
            <path
              d="M0 79C-5 50 -34 38 -34 1C-34 -21 -19 -39 0 -39C19 -39 34 -21 34 1C34 38 5 50 0 79Z"
              fill={color}
              stroke="#eef1f4"
              strokeWidth="3"
              className="[paint-order:stroke]"
            />
            {icon}
          </g>
        ))}
        <g transform="translate(1756 2126)">
          <rect width="43" height="50" rx="6" fill="#1663e5" />
          <rect x="9" y="6" width="25" height="32" rx="6" fill="#fff" />
          <path d="M14 14h6v9h-6zM23 14h6v9h-6z" fill="#1663e5" />
        </g>
      </g>
    </svg>
  );
}

/* ---------- page ---------- */

function Product({ gap, pad }: { gap: string; pad: string }) {
  return (
    <article className={`flex items-start ${gap}`}>
      <div className="h-[182px] w-[248px] bg-[#d0d0d0]" />
      <div className={`text-[29px] leading-[37px] ${pad}`}>
        <Fit text="Nome" className="w-[79px]" />
        <Fit text="Intolerancias" className="w-[168px]" />
        <Fit text="Prezo" className="w-[73px]" />
      </div>
    </article>
  );
}

const rows = [
  { row: "pl-[187px]", gap: "gap-[33px]", pad: "pt-8" },
  { row: "mt-40 pl-[187px]", gap: "gap-[28px]", pad: "pt-9" },
  { row: "mt-[131px] pl-[187px]", gap: "gap-[26px]", pad: "pt-[31px]" },
  { row: "mt-[115px] pl-48", gap: "gap-7", pad: "pt-9" },
];

export default function App() {
  return (
    <div className="flex h-[3508px] w-[2480px] flex-col overflow-hidden bg-[#bd925b] text-black [font-family:Lato,sans-serif]">
      <header className="h-[489px] shrink-0 pt-[65px]">
        <div className="flex justify-end pr-[92px] text-[38px] leading-[48px]">
          <Fit text="Galego | Portugués" className="w-[340px]" />
        </div>
        <div className="mt-[38px] flex h-[284px] items-center gap-[37px] pl-[55px]">
          <div className="h-[284px] w-[317px] bg-[#d0d0d0]" />
          <h1 className="pb-[30px] text-[145px] leading-[160px] font-bold">
            <Fit text="MIGAS AMIGAS" className="w-[1074px]" />
          </h1>
        </div>
      </header>

      <nav className="flex h-[143px] shrink-0 items-start bg-[#ebc699] pl-[153px] text-[58px] leading-[127px]">
        <Fit text="Inicio" className="w-[136px]" />
        <Fit text="|" className="ml-[48px] w-[5px] text-[57px]" />
        <Fit text="Panadería" className="ml-[53px] w-[258px]" />
        <Fit text="|" className="ml-[50px] w-[5px] text-[57px]" />
        <Fit text="Pastelería" className="ml-[53px] w-[258px]" />
        <Fit text="|" className="ml-[50px] w-[5px] text-[57px]" />
        <Fit text="Bolería e empanadas" className="ml-[52px] w-[547px]" />
      </nav>

      <section className="mx-[66px] mt-[49px] flex h-[458px] w-[2349px] shrink-0 items-start bg-[#d0d0d0] leading-[100px]">
        <h2 className="mt-[155px] ml-[384px] text-[95px]">
          <Fit text="Section name" className="w-[597px]" />
        </h2>
        <p className="mt-[231px] ml-[688px] text-[77px]">
          <Fit text="Foto sección" className="w-[436px]" />
        </p>
      </section>

      <main className="h-[1349px] shrink-0 pt-[104px]">
        {rows.map((r, i) => (
          <div key={i} className={`box-content grid h-[182px] grid-cols-[847px_759px_1fr] ${r.row}`}>
            <Product gap={r.gap} pad={r.pad} />
            <Product gap={r.gap} pad={r.pad} />
            <Product gap={r.gap} pad={r.pad} />
          </div>
        ))}
      </main>

      <CityMap />

      <footer className="flex h-[311px] shrink-0 bg-black pt-[39px] pl-[158px] text-[39px] leading-[49px] text-[#bd925b]">
        <div className="w-[838px]">
          <Fit text="Dirección:" className="w-[177px]" />
          <div className="pl-[69px]">
            <Fit text="Av. Lorem ipsum" className="w-[297px]" />
            <Fit text="15705" className="w-[107px]" />
            <Fit text="Compostela, A Coruña" className="w-[398px]" />
          </div>
        </div>
        <div className="w-[792px]">
          <Fit text="Teléfono:" className="w-[168px]" />
          <div className="pl-[71px]">
            <Fit text="+34 666 888 222" className="w-[307px]" />
            <Fit text="+34 986 888 222" className="w-[307px]" />
            <Fit text="Moncho e Loli" className="w-[247px]" />
          </div>
        </div>
        <div>
          <Fit text="Séguenos en redes!" className="w-[345px]" />
          <div className="flex items-start pt-[25px] pl-[114px]">
            <div className="mt-[3px] h-[99px] w-[102px] bg-[#d0d0d0]" />
            <div className="mt-[3px] ml-[39px] h-[99px] w-[102px] bg-[#d0d0d0]" />
            <div className="ml-[36px] h-[99px] w-[102px] bg-[#d0d0d0]" />
          </div>
        </div>
      </footer>
    </div>
  );
}
